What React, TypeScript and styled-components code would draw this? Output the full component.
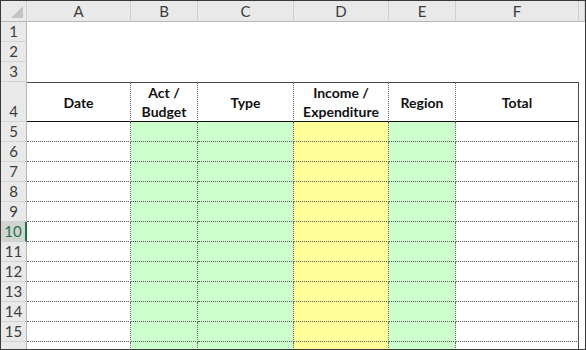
import React from "react";
import styled, { createGlobalStyle } from "styled-components";

const GlobalStyle = createGlobalStyle`
  html, body {
    margin: 0;
    padding: 0;
    background: #ffffff;
  }
  * {
    box-sizing: border-box;
  }
`;

const Frame = styled.div`
  width: 586px;
  height: 350px;
  border: 1px solid #3a3a3a;
  overflow: hidden;
  background: #ffffff;
  font-family: Lato, "Liberation Sans", sans-serif;
`;

const Sheet = styled.div`
  display: grid;
  grid-template-columns: 26px 104px 67px 96px 95px 67px 123px 1fr;
  grid-template-rows: 21px repeat(3, 20px) 40px repeat(12, 20px);
`;

const Corner = styled.div`
  background: #e9e9e9;
  border-right: 1px solid #d0d0d0;
  border-bottom: 1px solid #b8b8b8;
  display: flex;
  align-items: flex-end;
  justify-content: flex-end;
  padding: 0 3px 3px 0;
`;

const ColHead = styled.div`
  background: #e9e9e9;
  border-right: 1px solid #d0d0d0;
  border-bottom: 1px solid #b8b8b8;
  color: #3c3c3c;
  font-size: 15px;
  display: flex;
  align-items: center;
  justify-content: center;
`;

const RowHead = styled.div<{ $active?: boolean }>`
  background: ${(p) => (p.$active ? "#d3d3d3" : "#e9e9e9")};
  color: ${(p) => (p.$active ? "#217346" : "#3c3c3c")};
  border-bottom: 1px solid #d2d2d2;
  border-right: ${(p) => (p.$active ? "2px solid #217346" : "1px solid #b8b8b8")};
  font-size: 15px;
  display: flex;
  align-items: flex-end;
  justify-content: center;
  padding-bottom: 1px;
`;

const Blank = styled.div``;

type Fill = "none" | "green" | "yellow";

const fills: Record<Fill, string> = {
  none: "#ffffff",
  green: "#ccffcc",
  yellow: "#ffff99",
};

const HeadCell = styled.div<{ $last?: boolean }>`
  border-top: 1px solid #4a4a4a;
  border-bottom: 1px solid #111111;
  border-right: ${(p) => (p.$last ? "1px solid #4a4a4a" : "1px dotted #6a6a6a")};
  font-weight: 700;
  font-size: 14px;
  line-height: 19px;
  color: #111111;
  text-align: center;
  display: flex;
  align-items: center;
  justify-content: center;
`;

const DataCell = styled.div<{ $fill: Fill; $last?: boolean }>`
  background: ${(p) => fills[p.$fill]};
  border-bottom: 1px dotted #5a5a5a;
  border-right: ${(p) => (p.$last ? "1px solid #4a4a4a" : "1px dotted #6a6a6a")};
`;

const columns: { letter: string; title: React.ReactNode; fill: Fill }[] = [
  { letter: "A", title: "Date", fill: "none" },
  { letter: "B", title: (<>Act /<br />Budget</>), fill: "green" },
  { letter: "C", title: "Type", fill: "green" },
  { letter: "D", title: (<>Income /<br />Expenditure</>), fill: "yellow" },
  { letter: "E", title: "Region", fill: "green" },
  { letter: "F", title: "Total", fill: "none" },
];

const dataRows = Array.from({ length: 12 }, (_, i) => i + 5);

export default function App() {
  return (
    <>
      <GlobalStyle />
      <Frame>
        <Sheet>
          <Corner>
            <svg width="12" height="12" viewBox="0 0 12 12">
              <polygon points="12,0 12,12 0,12" fill="#c4c4c4" />
            </svg>
          </Corner>
          {columns.map((c) => (
            <ColHead key={c.letter}>{c.letter}</ColHead>
          ))}
          <ColHead />

          {[1, 2, 3].map((r) => (
            <React.Fragment key={r}>
              <RowHead>{r}</RowHead>
              {columns.map((c) => (
                <Blank key={c.letter} />
              ))}
              <Blank />
            </React.Fragment>
          ))}

          <RowHead>4</RowHead>
          {columns.map((c, i) => (
            <HeadCell key={c.letter} $last={i === columns.length - 1}>
              <span>{c.title}</span>
            </HeadCell>
          ))}
          <Blank />

          {dataRows.map((r) => (
            <React.Fragment key={r}>
              {/* last row is only a sliver in view, its number falls below the edge */}
              <RowHead $active={r === 10}>{r < 16 ? r : null}</RowHead>
              {columns.map((c, i) => (
                <DataCell key={c.letter} $fill={c.fill} $last={i === columns.length - 1} />
              ))}
              <Blank />
            </React.Fragment>
          ))}
        </Sheet>
      </Frame>
    </>
  );
}
